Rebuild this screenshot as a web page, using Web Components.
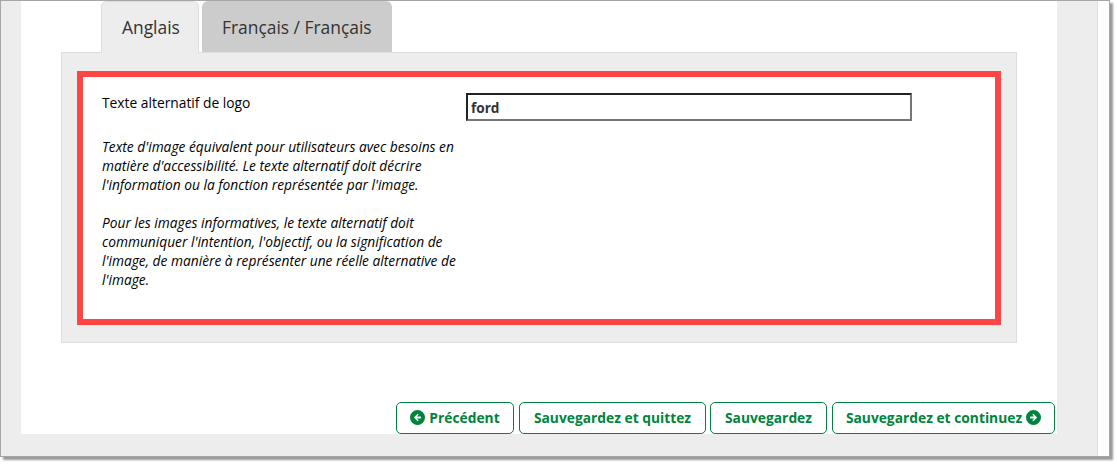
<!DOCTYPE html>
<html lang="fr">
<head>
<meta charset="utf-8">
<title>Texte alternatif de logo</title>
<style>
  html, body { margin: 0; padding: 0; background: #fff; }
  body { font-family: "Open Sans", sans-serif; width: 1117px; height: 464px; overflow: hidden; }
</style>
</head>
<body>
<app-window>
  <tab-bar>
    <tab-item active width="98">Anglais</tab-item>
    <tab-item width="190">Français / Français</tab-item>
  </tab-bar>
  <tab-panel>
    <logo-field label="Texte alternatif de logo" value="ford">
      <p>Texte d'image équivalent pour utilisateurs avec besoins en matière d'accessibilité. Le texte alternatif doit décrire l'information ou la fonction représentée par l'image.</p>
      <p>Pour les images informatives, le texte alternatif doit communiquer l'intention, l'objectif, ou la signification de l'image, de manière à représenter une réelle alternative de l'image.</p>
    </logo-field>
  </tab-panel>
  <action-bar>
    <action-button icon="left" width="118">Précédent</action-button>
    <action-button width="187">Sauvegardez et quittez</action-button>
    <action-button width="117">Sauvegardez</action-button>
    <action-button icon="right" width="223">Sauvegardez et continuez</action-button>
  </action-bar>
</app-window>

<script>
// Outer window frame with the gray gutters
class AppWindow extends HTMLElement {
  constructor() {
    super();
    this.attachShadow({ mode: 'open' });
    this.shadowRoot.innerHTML = `
      <style>
        :host {
          display: block;
          box-sizing: border-box;
          width: 1110px;
          height: 457px;
          border: 1px solid #a6a6a6;
          background: #fff;
          box-shadow: 3px 3px 2px #9a9a9a;
        }
        .frame { display: flex; height: 100%; }
        .gutter { flex: none; width: 20px; background: #ededed; }
        .center { flex: none; width: 1036px; background: #ededed; }
        .main {
          height: 433px;
          background: #fff;
          display: flex;
          flex-direction: column;
        }
        .side {
          flex: none;
          width: 40px;
          background: #ededed;
          border-right: 1px solid #ddd;
        }
      </style>
      <div class="frame">
        <div class="gutter"></div>
        <div class="center"><div class="main"><slot></slot></div></div>
        <div class="side"></div>
      </div>
    `;
  }
}

class TabBar extends HTMLElement {
  constructor() {
    super();
    this.attachShadow({ mode: 'open' });
    this.shadowRoot.innerHTML = `
      <style>
        :host { display: flex; gap: 3px; padding-left: 80px; height: 51px; }
      </style>
      <slot></slot>
    `;
  }
}

class TabItem extends HTMLElement {
  constructor() {
    super();
    this.attachShadow({ mode: 'open' });
    this.shadowRoot.innerHTML = `
      <style>
        :host {
          display: block;
          box-sizing: border-box;
          width: ${this.getAttribute('width') || 100}px;
          height: 51px;
          padding-left: 20px;
          border-radius: 6px 6px 0 0;
          background: #ccc;
          color: #333;
          font-size: 17.4px;
          line-height: 52px;
          white-space: nowrap;
          position: relative;
          z-index: 1;
        }
        :host([active]) {
          background: #ededed;
          border: 1px solid #ddd;
          border-bottom: 0;
          height: 52px;
          line-height: 50px;
        }
      </style>
      <slot></slot>
    `;
  }
}

class TabPanel extends HTMLElement {
  constructor() {
    super();
    this.attachShadow({ mode: 'open' });
    this.shadowRoot.innerHTML = `
      <style>
        :host {
          display: block;
          box-sizing: border-box;
          width: 956px;
          height: 291px;
          margin-left: 40px;
          padding: 18px 15px;
          background: #ededed;
          border: 1px solid #ddd;
        }
      </style>
      <slot></slot>
    `;
  }
}

// Red highlighted box with the label, help text and input
class LogoField extends HTMLElement {
  constructor() {
    super();
    this.attachShadow({ mode: 'open' });
    const label = this.getAttribute('label') || '';
    const value = this.getAttribute('value') || '';
    this.shadowRoot.innerHTML = `
      <style>
        :host {
          display: block;
          box-sizing: border-box;
          width: 924px;
          height: 254px;
          border: 6px solid #ff4444;
          background: #fff;
          color: #000;
          font-size: 13.8px;
          line-height: 19px;
        }
        .row { display: flex; padding: 16px 0 0 19px; }
        .text { width: 363px; }
        .label { height: 19px; margin-bottom: 25px; }
        .help { font-style: italic; font-size: 13.75px; }
        ::slotted(p) { margin: 0 0 19px; }
        input {
          box-sizing: border-box;
          width: 446px;
          height: 28px;
          margin: 0 0 0 1px;
          padding: 1px 3px;
          border: 2px solid;
          border-color: #222 #767676 #767676 #222;
          background: #fff;
          font: bold 13.6px "Open Sans", sans-serif;
          color: #333;
          outline: none;
        }
      </style>
      <div class="row">
        <div class="text">
          <div class="label">${label}</div>
          <div class="help"><slot></slot></div>
        </div>
        <input type="text" value="${value}" aria-label="${label}">
      </div>
    `;
  }
}

class ActionBar extends HTMLElement {
  constructor() {
    super();
    this.attachShadow({ mode: 'open' });
    this.shadowRoot.innerHTML = `
      <style>
        :host {
          display: flex;
          justify-content: flex-end;
          gap: 4px;
          margin-top: 59px;
          padding-right: 2px;
          height: 32px;
        }
        ::slotted(:nth-child(even)) { margin-left: 1px; }
      </style>
      <slot></slot>
    `;
  }
}

// Arrow-in-circle glyphs, drawn the way the font icon looks
const ARROWS = {
  left: '<path fill-rule="evenodd" d="M7 0a7 7 0 1 1 0 14A7 7 0 0 1 7 0ZM7.2 3.400 3.600 7l3.600 3.600.9-.9-1.700-1.700h3.800V6H6.400l1.700-1.700Z"/>',
  right: '<path fill-rule="evenodd" d="M7 0a7 7 0 1 1 0 14A7 7 0 0 1 7 0ZM6.800 3.400 10.400 7l-3.600 3.600-.9-.9L7.600 8H3.800V6h3.800L5.900 4.300Z"/>'
};

class ActionButton extends HTMLElement {
  constructor() {
    super();
    this.attachShadow({ mode: 'open' });
    const icon = this.getAttribute('icon');
    const svg = icon ? `<svg width="15" height="15" viewBox="0 0 14 14" fill="#00843d">${ARROWS[icon]}</svg>` : '';
    this.shadowRoot.innerHTML = `
      <style>
        :host {
          display: flex;
          align-items: center;
          justify-content: center;
          gap: 4px;
          box-sizing: border-box;
          width: ${this.getAttribute('width') || 100}px;
          height: 32px;
          padding-bottom: 2px;
          border: 1px solid #00843d;
          border-radius: 5px;
          background: #fff;
          color: #00843d;
          font-size: 13.8px;
          font-weight: 700;
          white-space: nowrap;
        }
        svg { flex: none; }
      </style>
      ${icon === 'left' ? svg : ''}<slot></slot>${icon === 'right' ? svg : ''}
    `;
  }
}

customElements.define('app-window', AppWindow);
customElements.define('tab-bar', TabBar);
customElements.define('tab-item', TabItem);
customElements.define('tab-panel', TabPanel);
customElements.define('logo-field', LogoField);
customElements.define('action-bar', ActionBar);
customElements.define('action-button', ActionButton);
</script>
</body>
</html>
